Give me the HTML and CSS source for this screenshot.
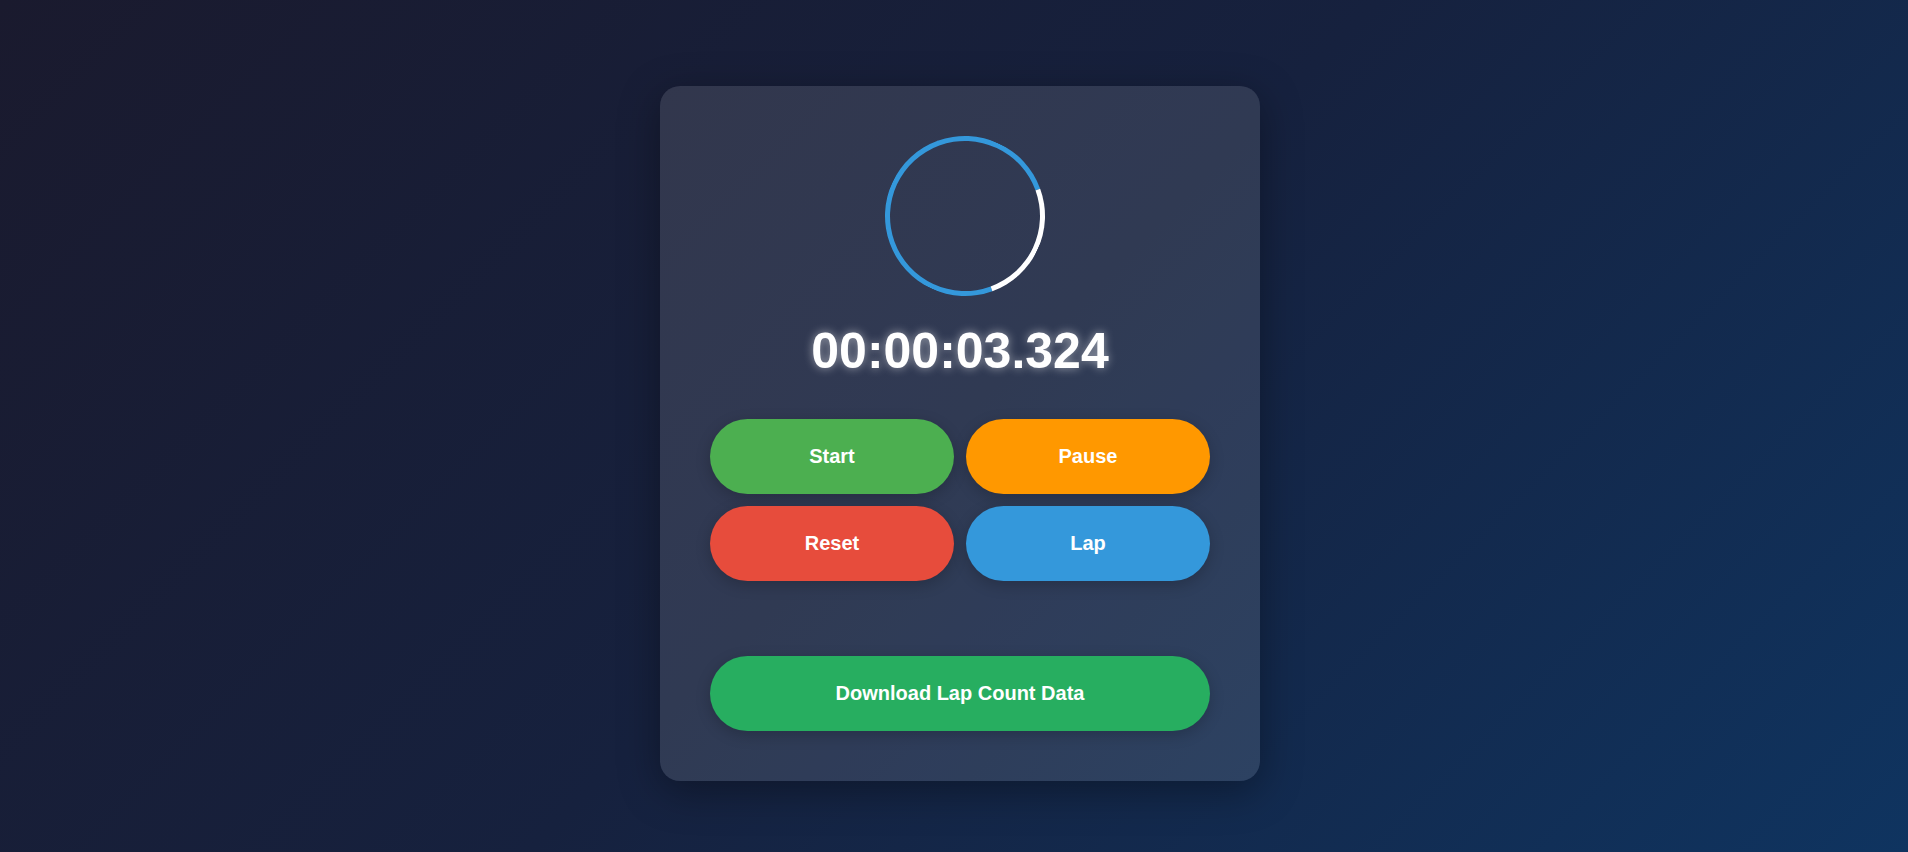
FILE: index.html
```html
<!DOCTYPE html>
<html lang="en">
<head>
<meta charset="UTF-8">
<title>Stopwatch</title>
<link rel="stylesheet" href="styles.css">
</head>
<body>
  <main class="page">
    <section class="card">
      <div class="dial-wrap">
        <div class="dial"></div>
      </div>
      <div class="timer">00:00:03.324</div>
      <div class="controls">
        <button class="btn btn-start">Start</button>
        <button class="btn btn-pause">Pause</button>
        <button class="btn btn-reset">Reset</button>
        <button class="btn btn-lap">Lap</button>
      </div>
      <ul class="laps"></ul>
      <button class="btn btn-download">Download Lap Count Data</button>
    </section>
  </main>
</body>
</html>
```

FILE: styles.css
```css
* {
  box-sizing: border-box;
}

html, body {
  margin: 0;
  padding: 0;
}

body {
  min-height: 100vh;
  background: linear-gradient(135deg, #1a1a2e 0%, #16213e 50%, #0f3460 100%);
  font-family: "Liberation Sans", Arial, sans-serif;
  color: #fff;
  overflow: hidden;
}

.page {
  min-height: 100vh;
  display: flex;
  justify-content: center;
  align-items: flex-start;
  padding-top: 86px;
  padding-left: 12px;
}

.card {
  width: 600px;
  padding: 50px;
  border-radius: 20px;
  background: rgba(255, 255, 255, 0.115);
  box-shadow: 0 10px 40px rgba(0, 0, 0, 0.35);
  display: flex;
  flex-direction: column;
}

.dial-wrap {
  display: flex;
  justify-content: center;
  padding-left: 10px;
}

.dial {
  width: 160px;
  height: 160px;
  border-radius: 50%;
  border: 5px solid #3498db;
  border-right-color: #ffffff;
  transform: rotate(25deg);
}

.timer {
  margin-top: 24px;
  text-align: center;
  font-size: 50px;
  font-weight: bold;
  line-height: 62px;
  text-shadow: 0 0 10px rgba(255, 255, 255, 0.55);
}

.controls {
  margin-top: 37px;
  display: grid;
  grid-template-columns: 1fr 1fr;
  gap: 12px;
}

.btn {
  border: none;
  border-radius: 50px;
  color: #fff;
  font-family: "Liberation Sans", Arial, sans-serif;
  font-size: 20px;
  font-weight: bold;
  line-height: 23px;
  padding: 26px 10px;
  box-shadow: 0 4px 15px rgba(0, 0, 0, 0.2);
  cursor: pointer;
}

.btn-start { background: #4caf50; }
.btn-pause { background: #ff9800; }
.btn-reset { background: #e74c3c; }
.btn-lap { background: #3498db; }

.laps {
  list-style: none;
  margin: 0;
  padding: 0;
  height: 75px;
}

.btn-download {
  width: 100%;
  background: #27ae60;
}
```
